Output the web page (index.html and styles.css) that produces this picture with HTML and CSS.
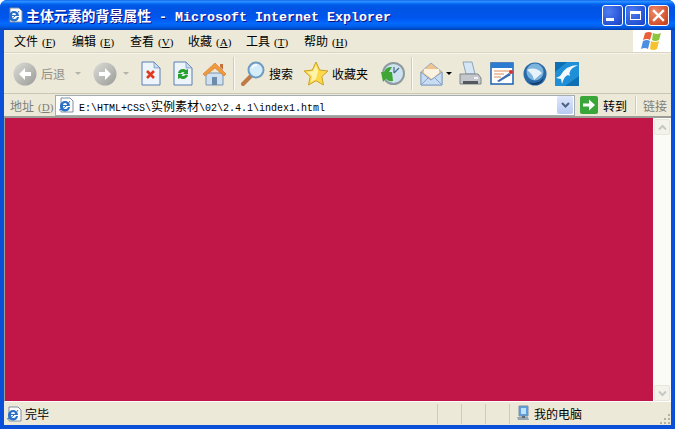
FILE: index.html
```html
<!DOCTYPE html>
<html lang="zh-CN">
<head>
  <meta charset="UTF-8" />
  <title>主体元素的背景属性 - Microsoft Internet Explorer</title>
  <link rel="stylesheet" href="styles.css">
</head>
<body>
<div class="window">
  <div class="titlebar">
    <svg class="title-icon" width="16" height="16" viewBox="0 0 16 16"><use href="#ie-page"/></svg>
    <div class="title-text"><span class="title-cjk">主体元素的背景属性</span> - Microsoft Internet Explorer</div>
    <div class="title-buttons">
      <div class="win-btn"><span class="min-mark"></span></div>
      <div class="win-btn"><span class="max-mark"></span></div>
      <div class="win-btn close">
        <svg width="13" height="13" viewBox="0 0 13 13"><path d="M2 2l9 9M11 2l-9 9" stroke="#fff" stroke-width="2.4" stroke-linecap="square"/></svg>
      </div>
    </div>
  </div>

  <div class="inner">
    <div class="menubar">
      <div class="menu-items">
        <span class="menu-item">文件<span class="key">(<u>F</u>)</span></span>
        <span class="menu-item">编辑<span class="key">(<u>E</u>)</span></span>
        <span class="menu-item">查看<span class="key">(<u>V</u>)</span></span>
        <span class="menu-item">收藏<span class="key">(<u>A</u>)</span></span>
        <span class="menu-item">工具<span class="key">(<u>T</u>)</span></span>
        <span class="menu-item">帮助<span class="key">(<u>H</u>)</span></span>
      </div>
      <div class="flag">
        <svg width="24" height="22" viewBox="0 0 24 22">
          <path d="M5 3q4-2 7 0l-2 7q-3-2-7 0z" fill="#e8603c"/>
          <path d="M13 3q4 2 8 0l-2 7q-4 2-7 0z" fill="#8cc63e"/>
          <path d="M3 11q4-2 7 0l-2 8q-3-2-7 0z" fill="#4c8fe0"/>
          <path d="M11 11q4 2 8 0l-2 8q-4 2-7 0z" fill="#f6c22e"/>
        </svg>
      </div>
    </div>

    <div class="toolbar">
      <svg class="t-back" width="24" height="24" viewBox="0 0 24 24"><use href="#nav-ball"/><path d="M6 12l6-6v4h6v4h-6v4z" fill="#fff"/></svg>
      <span class="t-label disabled">后退</span>
      <span class="arrow light t-arrow1"></span>
      <svg class="t-forward" width="24" height="24" viewBox="0 0 24 24"><use href="#nav-ball"/><path d="M18 12l-6-6v4H6v4h6v4z" fill="#fff"/></svg>
      <span class="arrow light t-arrow2"></span>
      <svg class="t-stop" width="20" height="25" viewBox="0 0 20 25"><use href="#doc"/><path d="M6 10l7 7M13 10l-7 7" stroke="#e03a1c" stroke-width="2.6"/></svg>
      <svg class="t-refresh" width="20" height="25" viewBox="0 0 20 25"><use href="#doc"/>
        <path d="M5 12a5 5 0 0 1 8-3l2-1v5h-5l1.500-1.500a3 3 0 0 0-4 1z" fill="#27a02e"/>
        <path d="M15 14a5 5 0 0 1-8 3l-2 1v-5h5l-1.500 1.500a3 3 0 0 0 4-1z" fill="#27a02e"/>
      </svg>
      <svg class="t-home" width="25" height="25" viewBox="0 0 25 25">
        <path d="M4 12h17v12H4z" fill="#cfe0f0" stroke="#7c95ad"/>
        <path d="M10 16h5v8h-5z" fill="#6d8cab"/>
        <path d="M1 13L13 2l11 11-2 2-9-8-10 8z" fill="#f09a3c" stroke="#d0702a" stroke-width=".6"/>
        <path d="M18 3h3v6l-3-3z" fill="#c8703a"/>
      </svg>
      <span class="sep t-sep1"></span>
      <svg class="t-search" width="25" height="26" viewBox="0 0 25 26">
        <path d="M10 15L2 23" stroke="#c07a48" stroke-width="4" stroke-linecap="round"/>
        <circle cx="15" cy="9" r="7.500" fill="#d5ecfa" stroke="#6f9cc0" stroke-width="2"/>
        <path d="M11 7a5 5 0 0 1 5-3" stroke="#fff" stroke-width="1.500" fill="none"/>
      </svg>
      <span class="t-label t-search-label">搜索</span>
      <svg class="t-star" width="26" height="25" viewBox="0 0 26 25">
        <path d="M13 1l3.600 8 8.400 1-6.200 5.600L20.500 24 13 19.700 5.500 24l1.700-8.400L1 10l8.400-1z" fill="#ffd94a" stroke="#c9a227"/>
        <path d="M13 4l2 6-2 8-5 3 1-6-5-4 6-1z" fill="#fff3a8"/>
      </svg>
      <span class="t-label t-fav-label">收藏夹</span>
      <svg class="t-history" width="25" height="25" viewBox="0 0 25 25">
        <circle cx="13.500" cy="12.500" r="10.500" fill="#cfe2ef" stroke="#8d9a9e" stroke-width="2"/>
        <path d="M14 12l5-5M14 12v-6" stroke="#4a6a8c" stroke-width="1.200"/>
        <path d="M1 11h3a8 8 0 0 1 8-5l-3 5h3l1 9q-6 1-8-4l4-2-6 7z" fill="#3fa535"/>
      </svg>
      <span class="sep t-sep2"></span>
      <svg class="t-mail" width="23" height="24" viewBox="0 0 23 24">
        <path d="M1 10L11 1l11 9v13H1z" fill="#f2c48a" stroke="#93a9c4"/>
        <path d="M4 11V7h15v4l-7 6z" fill="#fbf3df"/>
        <path d="M1 10l10 8 11-8v13H1z" fill="#c7dcf3" stroke="#7f9dc4"/>
        <path d="M1 23l8-8M22 23l-8-8" stroke="#86a4c8"/>
      </svg>
      <span class="arrow t-arrow3"></span>
      <svg class="t-print" width="23" height="25" viewBox="0 0 23 25">
        <path d="M4 1h9l3 12H7z" fill="#d7e6f4" stroke="#8ea3b8"/>
        <path d="M1 13h18l3 4v6H1z" fill="#c4c8cc" stroke="#80868c"/>
        <path d="M4 20h15v3H4z" fill="#55595e"/>
        <path d="M15 16h4v2h-4z" fill="#f4f4f4"/>
      </svg>
      <svg class="t-edit" width="24" height="23" viewBox="0 0 24 23">
        <path d="M1 1h22v21H1z" fill="#fff" stroke="#1e62b0" stroke-width="1.500"/>
        <path d="M1 1h22v5H1z" fill="#2b7bd0"/>
        <path d="M4 9h16M4 12h10M4 15h7" stroke="#e08a5a"/>
        <path d="M7 19l12-8 2 2-12 7z" fill="#3a6fb0"/>
        <circle cx="21" cy="10" r="2" fill="#d8302c"/>
      </svg>
      <svg class="t-msn" width="24" height="24" viewBox="0 0 24 24">
        <circle cx="12" cy="12" r="11.500" fill="#2a6aa8"/>
        <circle cx="12" cy="10" r="8.500" fill="#7db4de"/>
        <path d="M4 8q8-4 15 3l-8 7q-1-6-7-10z" fill="#e8f2fa"/>
        <path d="M6 20q8 3 15-4-3 7-9 7-4 0-6-3z" fill="#123f70"/>
      </svg>
      <svg class="t-bird" width="24" height="24" viewBox="0 0 24 24">
        <path d="M0 0h24v24H0z" fill="#1f8fd8"/>
        <path d="M0 0h12L0 10zM24 14v10H10z" fill="#0f6fb4"/>
        <path d="M23 3Q11 3 5 14l-4 2 5 1 1 5q2-8 6-9l2 1q-3-6 8-11z" fill="#f2f8fc"/>
      </svg>
    </div>

    <div class="addressbar">
      <span class="addr-label">地址<span class="key">(<u>D</u>)</span></span>
      <div class="addr-box">
        <svg class="addr-icon" width="16" height="16" viewBox="0 0 16 16"><use href="#ie-page"/></svg>
        <span class="addr-url">E:\HTML+CSS\<span class="addr-cjk">实例素材</span>\02\2.4.1\index1.html</span>
        <span class="addr-drop">
          <svg width="9" height="7" viewBox="0 0 9 7"><path d="M1 1l3.500 3.500L8 1" fill="none" stroke="#4d6185" stroke-width="2"/></svg>
        </span>
      </div>
      <svg class="go-icon" width="18" height="18" viewBox="0 0 18 18">
        <rect width="18" height="18" rx="2" fill="#3aa63a"/>
        <path d="M3 7.500h6V3.500l6 5.500-6 5.500v-4H3z" fill="#fff"/>
      </svg>
      <span class="go-label">转到</span>
      <span class="sep addr-sep"></span>
      <span class="links">链接</span>
    </div>

    <div class="viewport">
      <div class="page"></div>
      <div class="scrollbar">
        <div class="sb-btn"><svg width="9" height="7" viewBox="0 0 9 7"><path d="M1 5.500l3.500-3.500L8 5.500" fill="none" stroke="#c4c9c4" stroke-width="2"/></svg></div>
        <div class="sb-btn"><svg width="9" height="7" viewBox="0 0 9 7"><path d="M1 1.500l3.500 3.500L8 1.500" fill="none" stroke="#c4c9c4" stroke-width="2"/></svg></div>
      </div>
    </div>

    <div class="statusbar">
      <div class="st-main">
        <svg width="16" height="16" viewBox="0 0 16 16"><use href="#ie-page"/></svg>
        <span>完毕</span>
      </div>
      <div class="st-cell"></div>
      <div class="st-cell"></div>
      <div class="st-cell"></div>
      <div class="st-zone">
        <svg width="15" height="17" viewBox="0 0 15 17">
          <path d="M3 1h9v10H3z" fill="#5aa0e0" stroke="#7d8ea0"/>
          <path d="M5 3h5v6H5z" fill="#bfe2fa"/>
          <path d="M1 12h11l1 3H2z" fill="#9aa7b3"/>
          <path d="M6 11h3v2H6z" fill="#5c6a78"/>
        </svg>
        <span>我的电脑</span>
      </div>
      <div class="grip">
        <svg width="12" height="12" viewBox="0 0 12 12" fill="#b5b1a0">
          <path d="M9 1h2v2H9zM5 5h2v2H5zM9 5h2v2H9zM1 9h2v2H1zM5 9h2v2H5zM9 9h2v2H9z"/>
        </svg>
      </div>
    </div>
  </div>
</div>

<svg class="defs" width="0" height="0">
  <defs>
    <linearGradient id="ball" x1="0" y1="0" x2="1" y2="1">
      <stop offset="0" stop-color="#dcdcd8"/>
      <stop offset="1" stop-color="#9a9a96"/>
    </linearGradient>
    <g id="nav-ball"><circle cx="12" cy="12" r="11.500" fill="url(#ball)"/></g>
    <g id="doc">
      <path d="M1 1h12l6 6v17H1z" fill="#eef4fb" stroke="#5a7fb0"/>
      <path d="M13 1v6h6z" fill="#c9d9ee" stroke="#5a7fb0" stroke-width=".6"/>
    </g>
    <g id="ie-page">
      <path d="M3 1h9l3 3v11H3z" fill="#fff" stroke="#7f8f9f"/>
      <path d="M2 9a5 5 0 0 1 10 0H5a2.500 2.500 0 0 0 5 1h2a5 5 0 0 1-10-1zm3-1h4a2 2 0 0 0-4 0z" fill="#2a6fc8"/>
      <path d="M1 13q6-1 11-9" stroke="#2a6fc8" fill="none"/>
    </g>
  </defs>
</svg>
</body>
</html>
```

FILE: styles.css
```css
html, body {
  margin: 0;
  padding: 0;
}
body {
  width: 675px;
  height: 429px;
  overflow: hidden;
  background: #fff;
  font-family: "Noto Sans CJK SC", sans-serif;
  font-size: 12px;
  color: #000;
}
.defs {
  display: block;
}
.window {
  width: 675px;
  height: 429px;
  display: flex;
  flex-direction: column;
  background: #0a4fd8;
  border-radius: 7px 7px 0 0;
  overflow: hidden;
}

/* title bar */
.titlebar {
  height: 30px;
  flex: none;
  display: flex;
  align-items: center;
  padding: 0 7px 0 7px;
  box-sizing: border-box;
  background: linear-gradient(180deg, #0058ee 0, #3593ff 1px, #127dff 3px, #0262ee 4px, #0054e3 7px, #0055eb 17px, #005bf5 20px, #026afe 23px, #0062ef 26px, #0052d6 28px, #0040ab 30px);
}
.title-icon {
  flex: none;
  margin-right: 3px;
}
.title-text {
  flex: 1;
  padding-top: 2px;
  font-family: "Liberation Mono", "Noto Sans CJK SC", monospace;
  font-size: 13.33px;
  font-weight: bold;
  line-height: 18px;
  color: #fff;
  white-space: pre;
  text-shadow: 1px 1px #0f1089;
}
.title-cjk {
  font-family: "Noto Sans CJK SC", sans-serif;
  font-size: 13.9px;
}
.title-buttons {
  display: flex;
  gap: 2px;
  margin-right: -1px;
}
.win-btn {
  width: 19px;
  height: 19px;
  border: 1px solid #fff;
  border-radius: 3px;
  background: radial-gradient(circle at 30% 30%, #4f7df0, #2553d6 70%, #1b3fb8);
  display: flex;
  align-items: center;
  justify-content: center;
  position: relative;
}
.win-btn.close {
  background: radial-gradient(circle at 30% 30%, #ea8a6c, #d4502c 70%, #b83a1c);
}
.min-mark {
  width: 8px;
  height: 3px;
  background: #fff;
  margin: 8px 5px 0 0;
}
.max-mark {
  width: 11px;
  height: 9px;
  border: 1px solid #fff;
  border-top-width: 3px;
  box-sizing: border-box;
}

/* everything between the blue edges */
.inner {
  flex: 1;
  min-height: 0;
  margin: 0 4px 4px 4px;
  display: flex;
  flex-direction: column;
  background: #ece9d8;
}
.menubar {
  height: 23px;
  flex: none;
  display: flex;
  box-sizing: border-box;
  border-bottom: 1px solid #d8d5c4;
}
.menu-items {
  flex: 1;
  display: flex;
  align-items: center;
  padding-left: 10px;
}
.menu-item {
  width: 58px;
  flex: none;
  font-size: 12px;
  line-height: 16px;
  white-space: nowrap;
}
.key {
  margin-left: 4px;
  font-family: "Liberation Serif", serif;
  font-size: 11px;
}
.flag {
  width: 38px;
  background: #fff;
  display: flex;
  align-items: center;
  justify-content: center;
}

/* toolbar */
.toolbar {
  height: 41px;
  flex: none;
  display: flex;
  align-items: center;
  box-sizing: border-box;
  border-top: 1px solid #f6f4ea;
  border-bottom: 1px solid #c9c6b4;
}
.t-label {
  font-size: 12px;
  white-space: nowrap;
}
.t-label.disabled {
  color: #8f8f88;
}
.arrow {
  width: 0;
  height: 0;
  border-left: 3px solid transparent;
  border-right: 3px solid transparent;
  border-top: 3px solid #000;
}
.arrow.light {
  border-top-color: #b5b3a8;
}
.sep {
  width: 1px;
  align-self: stretch;
  background: #cfccba;
  box-shadow: 1px 0 #fbfaf3;
}
.t-back { margin-left: 9px; }
.t-label.disabled { margin-left: 4px; }
.t-arrow1 { margin-left: 10px; }
.t-forward { margin-left: 12px; }
.t-arrow2 { margin-left: 6px; }
.t-stop { margin-left: 12px; }
.t-refresh { margin-left: 12px; }
.t-home { margin-left: 9px; }
.t-sep1 { margin: 3px 0 3px 6px; }
.t-search { margin-left: 7px; }
.t-search-label { margin-left: 3px; }
.t-star { margin-left: 10px; }
.t-fav-label { margin-left: 3px; font-size: 12px; }
.t-history { margin-left: 12px; }
.t-sep2 { margin: 3px 0 3px 6px; }
.t-mail { margin-left: 8px; }
.t-arrow3 { margin-left: 3px; }
.t-print { margin-left: 7px; }
.t-edit { margin-left: 8px; }
.t-msn { margin-left: 9px; }
.t-bird { margin-left: 8px; }

/* address row */
.addressbar {
  height: 22px;
  flex: none;
  display: flex;
  align-items: center;
}
.addr-label {
  width: 50px;
  flex: none;
  padding-left: 6px;
  box-sizing: border-box;
  color: #7f7f78;
  white-space: nowrap;
}
.addr-box {
  width: 520px;
  height: 21px;
  flex: none;
  margin-left: 1px;
  box-sizing: border-box;
  border: 1px solid #a5acb2;
  background: #fff;
  display: flex;
  align-items: center;
  padding: 0 1px 0 2px;
}
.addr-icon {
  flex: none;
}
.addr-url {
  flex: 1;
  margin-left: 5px;
  font-family: "Liberation Mono", "Noto Sans CJK SC", monospace;
  font-size: 10px;
  white-space: nowrap;
}
.addr-cjk {
  font-family: "Noto Sans CJK SC", sans-serif;
  font-size: 12px;
}
.addr-drop {
  width: 16px;
  height: 18px;
  flex: none;
  border-radius: 2px;
  background: linear-gradient(180deg, #dfe8fb, #b8caf2);
  display: flex;
  align-items: center;
  justify-content: center;
}
.go-icon {
  flex: none;
  margin-left: 5px;
}
.go-label {
  margin-left: 5px;
  white-space: nowrap;
}
.addr-sep {
  margin: 2px 0 2px 8px;
}
.links {
  margin-left: 7px;
  color: #7f7f78;
  white-space: nowrap;
}

/* page area */
.viewport {
  flex: 1;
  min-height: 0;
  display: flex;
  box-sizing: border-box;
  border-top: 2px solid #9d9d98;
  border-left: 1px solid #9d9d98;
  border-bottom: 1px solid #fff;
}
.page {
  flex: 1;
  background: #c01748;
}
.scrollbar {
  width: 18px;
  flex: none;
  box-sizing: border-box;
  padding: 1px 1px 0 1px;
  background: #fafaf6;
  display: flex;
  flex-direction: column;
  justify-content: space-between;
}
.sb-btn {
  height: 16px;
  box-sizing: border-box;
  border: 1px solid #e6e6dc;
  border-radius: 2px;
  background: #f3f3ec;
  display: flex;
  align-items: center;
  justify-content: center;
}

/* status bar */
.statusbar {
  height: 23px;
  flex: none;
  display: flex;
  align-items: center;
}
.st-main {
  width: 433px;
  flex: none;
  display: flex;
  align-items: center;
  gap: 3px;
  padding-left: 2px;
  box-sizing: border-box;
}
.st-cell {
  width: 24px;
  height: 20px;
  flex: none;
  box-sizing: border-box;
  border-left: 1px solid #cfccba;
}
.st-zone {
  flex: 1;
  height: 20px;
  display: flex;
  align-items: center;
  gap: 3px;
  padding-left: 6px;
  box-sizing: border-box;
  border-left: 1px solid #cfccba;
}
.grip {
  width: 14px;
  align-self: flex-end;
  display: flex;
  justify-content: flex-end;
}
```
